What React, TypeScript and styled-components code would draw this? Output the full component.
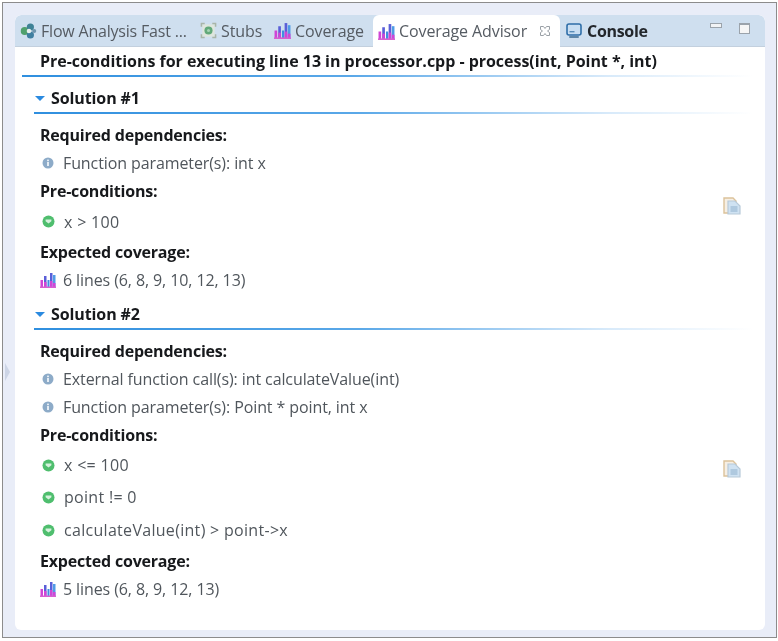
import React from 'react';
import styled, { createGlobalStyle } from 'styled-components';

const GlobalStyle = createGlobalStyle`
  html, body {
    margin: 0;
    padding: 0;
    background: #ffffff;
  }
  body {
    font-family: 'Open Sans', 'Noto Sans', sans-serif;
  }
`;

const Frame = styled.div`
  position: relative;
  box-sizing: border-box;
  width: 775px;
  height: 636px;
  margin: 2px 0 0 2px;
  padding: 12px 11px 7px 12px;
  background: #e9edf8;
  border: 1px solid #8c8c8c;
  filter: blur(0.55px);

  /* sash handle on the left edge */
  &::before {
    content: '';
    position: absolute;
    left: 2px;
    top: 360px;
    border-left: 5px solid #cdd5e6;
    border-top: 9px solid transparent;
    border-bottom: 9px solid transparent;
  }
`;

const Panel = styled.div`
  height: 100%;
  display: flex;
  flex-direction: column;
  background: #ffffff;
  border-radius: 6px;
  overflow: hidden;
`;

const TabBar = styled.div`
  box-sizing: border-box;
  flex: none;
  height: 32px;
  display: flex;
  align-items: flex-end;
  background: #cfdfef;
  border-bottom: 1px solid #c3d0de;
  border-radius: 6px 6px 0 0;
`;

const Tab = styled.div<{ $width: number; $pad?: number; $active?: boolean }>`
  box-sizing: border-box;
  width: ${(p) => p.$width}px;
  height: ${(p) => (p.$active ? 32 : 31)}px;
  display: flex;
  align-items: center;
  gap: 4px;
  padding-left: ${(p) => p.$pad ?? 4}px;
  font-size: 16px;
  letter-spacing: -0.1px;
  color: #555b62;
  white-space: nowrap;
  ${(p) =>
    p.$active &&
    `
    background: #ffffff;
    border-radius: 6px 6px 0 0;
    margin-bottom: -1px;
  `}
`;

const FlowLabel = styled.span`
  letter-spacing: -0.2px;
`;

const ConsoleLabel = styled.span`
  margin-left: 1px;
  font-weight: 700;
  color: #23272c;
  letter-spacing: -0.3px;
`;

const TabClose = styled.svg`
  margin-left: 8px;
  flex: none;
`;

const ViewButtons = styled.div`
  margin-left: auto;
  align-self: flex-start;
  display: flex;
  gap: 17px;
  padding: 7px 15px 0 0;
`;

const MinButton = styled.div`
  box-sizing: border-box;
  width: 12px;
  height: 5px;
  margin-top: 1px;
  background: #f1f3f5;
  border: 1px solid #9ba3ab;
`;

const MaxButton = styled.div`
  box-sizing: border-box;
  width: 11px;
  height: 11px;
  margin-top: 1px;
  background: #f6f6f6;
  border: 1px solid #9ba3ab;
  border-top-width: 2px;
`;

const Body = styled.div`
  flex: 1;
  padding: 0 12px 0 7px;
`;

const PageTitle = styled.div`
  height: 28px;
  padding: 0 0 0 18px;
  line-height: 28px;
  font-size: 16px;
  font-weight: 700;
  letter-spacing: -0.03px;
  color: #17191c;
  white-space: nowrap;
`;

const Rule = styled.div<{ $left?: number }>`
  height: 2px;
  margin-left: ${(p) => p.$left ?? 0}px;
  background: linear-gradient(90deg, #2f8fdf 0%, #5aa8e8 45%, #d8eafa 80%, #ffffff 100%);
`;

const Section = styled.section``;

const SolutionHeader = styled.div`
  box-sizing: border-box;
  height: 35px;
  display: flex;
  align-items: center;
  gap: 6px;
  padding: 7px 0 0 13px;
  font-size: 16px;
  font-weight: 700;
  letter-spacing: -0.1px;
  color: #17191c;
`;

const Caret = styled.span`
  width: 0;
  height: 0;
  border-left: 5px solid transparent;
  border-right: 5px solid transparent;
  border-top: 5px solid #2b8ae0;
`;

const SolutionBody = styled.div`
  display: flex;
  align-items: center;
`;

const Fields = styled.div`
  flex: 1;
  padding: 7px 0 0 18px;
`;

const Label = styled.div`
  height: 28px;
  line-height: 28px;
  font-size: 16px;
  font-weight: 700;
  letter-spacing: -0.2px;
  color: #17191c;
`;

const Row = styled.div<{ $height?: number }>`
  height: ${(p) => p.$height ?? 28}px;
  display: flex;
  align-items: center;
  gap: 7px;
  font-size: 16px;
  letter-spacing: -0.1px;
  color: #50565c;
  white-space: nowrap;
`;

const ConditionRow = styled(Row)`
  gap: 8px;
  letter-spacing: 0.3px;
`;

const IconSlot = styled.span`
  width: 16px;
  height: 16px;
  display: flex;
  align-items: center;
  justify-content: center;
  flex: none;
`;

const CopyButton = styled.div`
  width: 18px;
  height: 18px;
  margin: 4px 12px 0 0;
  flex: none;
`;

const ChartIcon = ({ size = 16 }: { size?: number }) => (
  <svg width={size} height={size} viewBox="0 0 16 16">
    <rect x="0.5" y="8" width="2.5" height="8" fill="#cf45d6" />
    <rect x="4" y="4" width="2.5" height="12" fill="#5a5fd8" />
    <rect x="4" y="10" width="2.5" height="6" fill="#cf45d6" />
    <rect x="7.5" y="8" width="2" height="8" fill="#3f8fe0" />
    <rect x="10" y="1" width="2.5" height="15" fill="#5a5fd8" />
    <rect x="10" y="9" width="2.5" height="7" fill="#cf45d6" />
    <rect x="13" y="3" width="2.5" height="13" fill="#4f9be6" />
    <rect x="13" y="11" width="2.5" height="5" fill="#cf45d6" />
    <rect x="0" y="14.5" width="16" height="1.5" fill="#d760d0" />
  </svg>
);

const FlowIcon = () => (
  <svg width="17" height="18" viewBox="0 0 18 18">
    <circle cx="5" cy="9" r="4.2" fill="#4fa06c" />
    <circle cx="11" cy="4.8" r="3.8" fill="#3e8296" />
    <circle cx="11" cy="13.2" r="3.8" fill="#3f7fa0" />
    <circle cx="15" cy="9" r="2.2" fill="#6f95ad" />
    <circle cx="9.5" cy="9" r="2.4" fill="#e8f0ee" />
  </svg>
);

const StubsIcon = () => (
  <svg width="17" height="17" viewBox="0 0 18 18" fill="none">
    <rect x="2.5" y="2.5" width="13" height="13" fill="#dfe6dd" />
    <path d="M1.5 5V1.5H5M13 1.5h3.5V5M16.5 13v3.5H13M5 16.5H1.5V13" stroke="#a9b5a8" strokeWidth="1.6" />
    <circle cx="9" cy="9" r="4.3" fill="#62a97a" />
    <circle cx="9" cy="9" r="1.6" fill="#a5d4b2" />
  </svg>
);

const ConsoleIcon = () => (
  <svg width="16" height="16" viewBox="0 0 16 16">
    <rect x="1" y="1" width="14" height="11" rx="2" fill="#c9def2" stroke="#2f6ea8" strokeWidth="1.6" />
    <rect x="3.5" y="8" width="5" height="1.4" fill="#5b8db8" />
    <rect x="3" y="13" width="10" height="2" rx="1" fill="#5f86a8" />
  </svg>
);

const InfoIcon = () => (
  <svg width="12" height="12" viewBox="0 0 12 12">
    <circle cx="6" cy="6" r="5.5" fill="#8dabc8" />
    <rect x="5.1" y="5" width="1.8" height="4" fill="#eef3f8" />
    <rect x="5.1" y="2.6" width="1.8" height="1.6" fill="#eef3f8" />
  </svg>
);

const ConditionIcon = () => (
  <svg width="13" height="13" viewBox="0 0 13 13">
    <circle cx="6.5" cy="6.5" r="6" fill="#4fbe6e" />
    <path d="M3.6 4.6h5.8v1.6L6.5 8.4 3.6 6.2z" fill="#d6f1dd" />
  </svg>
);

const CopyIcon = () => (
  <svg width="18" height="18" viewBox="0 0 18 18">
    <path d="M1 1h9l3 3v12H1z" fill="#f6efe4" stroke="#dcc29a" strokeWidth="1.4" />
    <path d="M5 4h7l5 5v8H5z" fill="#cfe2f2" stroke="#b7c9d8" strokeWidth="1.2" />
    <path d="M7.5 10h7M7.5 12h7M7.5 14h7" stroke="#8fb0cc" strokeWidth="1" />
  </svg>
);

const CloseGlyph = () => (
  <TabClose width="12" height="12" viewBox="0 0 12 12" fill="none">
    <path d="M1.5 1.5h3l1.5 2 1.5-2h3v3l-2 1.5 2 1.5v3h-3L6 8.5l-1.5 2h-3v-3l2-1.5-2-1.5z" stroke="#9aa0a6" strokeWidth="1" />
  </TabClose>
);

type Item = { text: string; height?: number };

type Solution = {
  title: string;
  dependencies: string[];
  conditions: Item[];
  coverage: string;
  coverageHeight: number;
};

const solutions: Solution[] = [
  {
    title: 'Solution #1',
    dependencies: ['Function parameter(s): int x'],
    conditions: [{ text: 'x > 100', height: 33 }],
    coverage: '6 lines (6, 8, 9, 10, 12, 13)',
    coverageHeight: 27,
  },
  {
    title: 'Solution #2',
    dependencies: ['External function call(s): int calculateValue(int)', 'Function parameter(s): Point * point, int x'],
    conditions: [
      { text: 'x <= 100', height: 32 },
      { text: 'point != 0', height: 32 },
      { text: 'calculateValue(int) > point->x', height: 34 },
    ],
    coverage: '5 lines (6, 8, 9, 12, 13)',
    coverageHeight: 28,
  },
];

const App = () => {
  return (
    <>
      <GlobalStyle />
      <Frame>
        <Panel>
          <TabBar>
            <Tab $width={181} $pad={5}>
              <FlowIcon />
              <FlowLabel>Flow Analysis Fast ...</FlowLabel>
            </Tab>
            <Tab $width={74}>
              <StubsIcon />
              Stubs
            </Tab>
            <Tab $width={103}>
              <ChartIcon size={17} />
              Coverage
            </Tab>
            <Tab $width={187} $pad={5} $active>
              <ChartIcon size={17} />
              Coverage Advisor
              <CloseGlyph />
            </Tab>
            <Tab $width={100} $pad={6}>
              <ConsoleIcon />
              <ConsoleLabel>Console</ConsoleLabel>
            </Tab>
            <ViewButtons>
              <MinButton />
              <MaxButton />
            </ViewButtons>
          </TabBar>
          <Body>
            <PageTitle>Pre-conditions for executing line 13 in processor.cpp - process(int, Point *, int)</PageTitle>
            <Rule />
            {solutions.map((solution) => (
              <Section key={solution.title}>
                <SolutionHeader>
                  <Caret />
                  {solution.title}
                </SolutionHeader>
                <Rule $left={12} />
                <SolutionBody>
                  <Fields>
                    <Label>Required dependencies:</Label>
                    {solution.dependencies.map((dep) => (
                      <Row key={dep}>
                        <IconSlot>
                          <InfoIcon />
                        </IconSlot>
                        {dep}
                      </Row>
                    ))}
                    <Label>Pre-conditions:</Label>
                    {solution.conditions.map((condition) => (
                      <ConditionRow key={condition.text} $height={condition.height}>
                        <IconSlot>
                          <ConditionIcon />
                        </IconSlot>
                        {condition.text}
                      </ConditionRow>
                    ))}
                    <Label>Expected coverage:</Label>
                    <Row $height={solution.coverageHeight}>
                      <IconSlot>
                        <ChartIcon />
                      </IconSlot>
                      {solution.coverage}
                    </Row>
                  </Fields>
                  <CopyButton>
                    <CopyIcon />
                  </CopyButton>
                </SolutionBody>
              </Section>
            ))}
          </Body>
        </Panel>
      </Frame>
    </>
  );
};

export default App;
